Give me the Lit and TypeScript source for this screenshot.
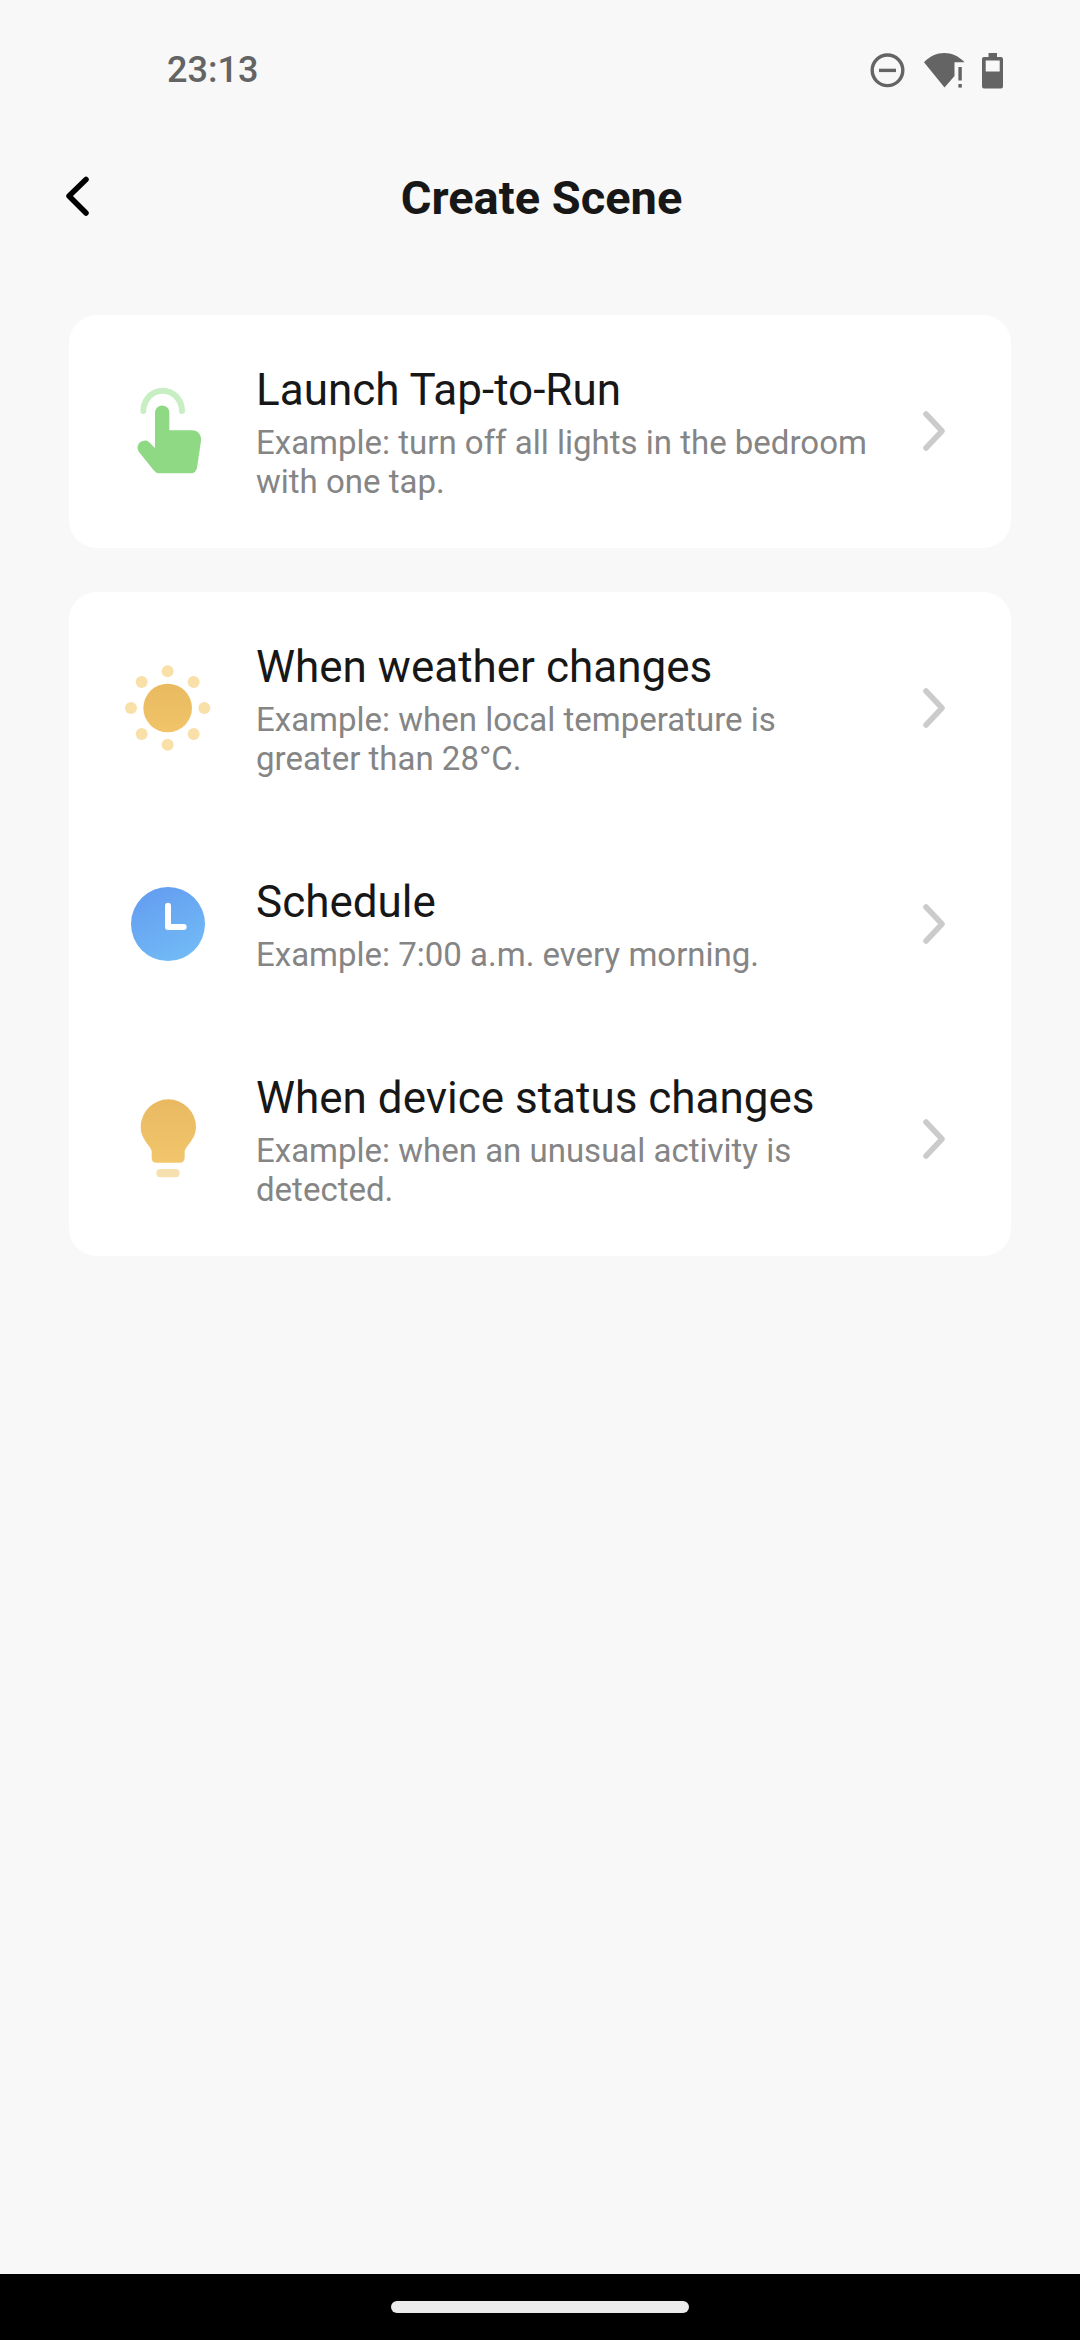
import { LitElement, html, css, svg, type SVGTemplateResult } from "lit";
import { customElement, property } from "lit/decorators.js";

const tapIcon = svg`
  <path d="M-74 -60A58 61 0 0 1 42 -60" fill="none" stroke="#c8eec3" stroke-width="18" stroke-linecap="round"/>
  <path fill="#8fd985" d="M-39 51V-55A21.5 21.5 0 0 1 4 -55V-2H72C90 -2 101 12 99 30L87 110Q84 127 68 127H-26Q-36 127 -43 118L-87 63C-97 50 -89 30 -72 29Q-64 28 -57 33Z"/>`;

const dots = [[0, -110], [78, -78], [110, 0], [78, 78], [0, 110], [-78, 78], [-110, 0], [-78, -78]];
const sunIcon = svg`
  <defs><linearGradient id="sun" x1="0" y1="0" x2="0" y2="1">
    <stop offset="0" stop-color="#e9ba60"/><stop offset="1" stop-color="#f1c469"/>
  </linearGradient></defs>
  <circle cx="-1" cy="0" r="73" fill="url(#sun)"/>
  ${dots.map(([x, y]) => svg`<circle cx=${x - 1} cy=${y} r="18" fill="#f9e0a9"/>`)}`;

const clockIcon = svg`
  <defs><linearGradient id="clock" x1="0.2" y1="0" x2="0.7" y2="1">
    <stop offset="0" stop-color="#649cf0"/><stop offset="1" stop-color="#71bbf6"/>
  </linearGradient></defs>
  <circle r="111" fill="url(#clock)"/>
  <path d="M0 -55V9H47" fill="none" stroke="#fff" stroke-width="18" stroke-linecap="round" stroke-linejoin="round"/>`;

const bulbIcon = svg`
  <defs><linearGradient id="bulb" x1="0" y1="0" x2="0" y2="1">
    <stop offset="0" stop-color="#e8b961"/><stop offset="1" stop-color="#f2c66c"/>
  </linearGradient></defs>
  <path fill="url(#bulb)" d="M-49 36C-56 16 -82 0 -82 -36A83 83 0 1 1 84 -36C84 0 57 16 50 36V56Q49 71 35 71H-35Q-49 71 -49 56Z"/>
  <rect x="-35" y="90" width="70" height="25" rx="12" fill="#f7e0b0"/>`;

interface Trigger {
  icon: SVGTemplateResult;
  title: string;
  example: string;
}

const groups: Trigger[][] = [
  [
    { icon: tapIcon, title: "Launch Tap-to-Run", example: "Example: turn off all lights in the bedroom with one tap." },
  ],
  [
    { icon: sunIcon, title: "When weather changes", example: "Example: when local temperature is greater than 28°C." },
    { icon: clockIcon, title: "Schedule", example: "Example: 7:00 a.m. every morning." },
    { icon: bulbIcon, title: "When device status changes", example: "Example: when an unusual activity is detected." },
  ],
];

@customElement("status-bar")
export class StatusBar extends LitElement {
  static styles = css`
    :host {
      display: flex;
      align-items: center;
      justify-content: space-between;
      height: 140px;
      padding: 0 76px 0 167px;
      color: #646464;
    }
    .time {
      font-family: Roboto, "Liberation Sans", sans-serif;
      font-size: 36px;
      line-height: 44px;
      font-weight: 500;
    }
    .icons {
      display: flex;
      align-items: center;
      gap: 16px;
    }
    svg {
      display: block;
      fill: currentColor;
    }
  `;

  render() {
    return html`
      <time class="time">23:13</time>
      <div class="icons">
        <svg width="40" height="40" viewBox="0 0 40 40" aria-hidden="true">
          <circle cx="19.5" cy="20.3" r="15.3" fill="none" stroke="currentColor" stroke-width="3.4" />
          <rect x="11" y="18.7" width="17" height="3.4" />
        </svg>
        <svg width="42" height="40" viewBox="0 0 42 40" aria-hidden="true">
          <path d="M0 12.3C6 6 13 3 20.3 3S34.6 6 40.6 12.3H30.5V26L20.5 37.5Z" />
          <rect x="34.4" y="17" width="3.4" height="13.5" />
          <rect x="34.4" y="34" width="3.4" height="3.6" />
        </svg>
        <svg width="22" height="40" viewBox="0 0 22 40" aria-hidden="true">
          <path fill-rule="evenodd" d="M6.5 3H15V7H19Q21 7 21 9V36.5Q21 38.5 19 38.5H2Q0 38.5 0 36.5V9Q0 7 2 7H6.5ZM3.7 10.5V21.5H17.7V10.5Z" />
        </svg>
      </div>
    `;
  }
}

@customElement("trigger-row")
export class TriggerRow extends LitElement {
  static styles = css`
    :host {
      display: block;
    }
    .row {
      display: flex;
      align-items: center;
      gap: 40px;
      box-sizing: border-box;
      width: 100%;
      min-height: 198px;
      margin: 0;
      padding: 46px 65px 47px 51px;
      border: 0;
      background: none;
      font-family: inherit;
      text-align: left;
      cursor: pointer;
    }
    .icon,
    .chevron {
      display: block;
      flex: none;
    }
    .text {
      flex: 1;
      min-width: 0;
      display: flex;
      flex-direction: column;
      gap: 4px;
    }
    .title {
      color: #171717;
      font-size: 44px;
      line-height: 58px;
    }
    .example {
      color: #858585;
      font-size: 33px;
      line-height: 39px;
    }
  `;

  @property({ attribute: false }) trigger!: Trigger;

  render() {
    const { icon, title, example } = this.trigger;
    return html`
      <button class="row" type="button">
        <svg class="icon" width="96" height="96" viewBox="-144 -144 288 288" aria-hidden="true">${icon}</svg>
        <span class="text">
          <span class="title">${title}</span>
          <span class="example">${example}</span>
        </span>
        <svg class="chevron" width="24" height="40" viewBox="0 0 24 40" aria-hidden="true">
          <path d="M4 3L20 20L4 37" fill="none" stroke="#cbcbcb" stroke-width="5.5" stroke-linecap="round" stroke-linejoin="round" />
        </svg>
      </button>
    `;
  }
}

@customElement("app-root")
export class AppRoot extends LitElement {
  static styles = css`
    :host {
      display: flex;
      flex-direction: column;
      min-height: 100vh;
      background: #f8f8f8;
      font-family: Roboto, "Liberation Sans", sans-serif;
    }
    .header {
      display: grid;
      grid-template-columns: 96px 1fr 96px;
      align-items: center;
      height: 116px;
      padding: 0 26px 0 29px;
    }
    .back {
      display: flex;
      align-items: center;
      justify-content: center;
      height: 96px;
      padding: 0;
      border: 0;
      background: none;
      color: #000;
      cursor: pointer;
    }
    .heading {
      margin: 0;
      text-align: center;
      color: #171717;
      font-size: 47px;
      line-height: 56px;
      font-weight: 700;
    }
    .main {
      flex: 1;
      display: flex;
      flex-direction: column;
      gap: 44px;
      padding: 59px 69px;
    }
    .card {
      background: #fff;
      border-radius: 28px;
    }
    .gesture {
      display: flex;
      align-items: center;
      justify-content: center;
      height: 66px;
      background: #000;
    }
    .pill {
      width: 298px;
      height: 12px;
      border-radius: 6px;
      background: #ebebeb;
    }
  `;

  render() {
    return html`
      <status-bar></status-bar>
      <header class="header">
        <button class="back" type="button" aria-label="Back">
          <svg width="24" height="44" viewBox="0 0 24 44" aria-hidden="true">
            <path d="M21 3.5L4 20L21 37" fill="none" stroke="currentColor" stroke-width="5.5" stroke-linecap="round" stroke-linejoin="round" />
          </svg>
        </button>
        <h1 class="heading">Create Scene</h1>
      </header>
      <main class="main">
        ${groups.map(
          (group) => html`
            <section class="card">
              ${group.map((trigger) => html`<trigger-row .trigger=${trigger}></trigger-row>`)}
            </section>
          `,
        )}
      </main>
      <footer class="gesture"><div class="pill"></div></footer>
    `;
  }
}
